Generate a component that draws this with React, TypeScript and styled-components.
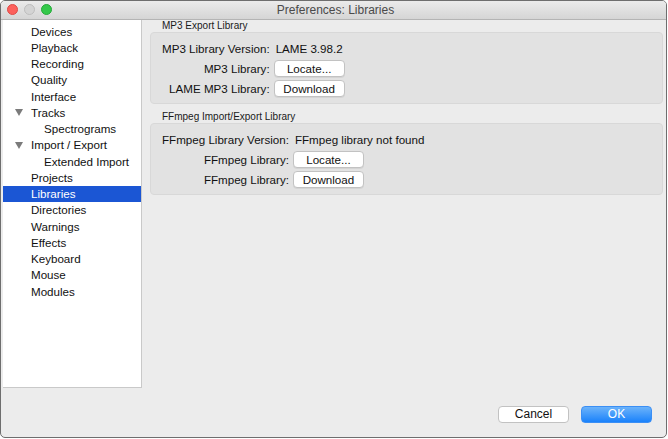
import * as React from 'react';
import styled, { createGlobalStyle } from 'styled-components';

interface NavItem {
  label: string;
  level: number;
  expandable?: boolean;
}

interface LibraryRow {
  label: string;
  value?: string;
  button?: string;
}

interface LibraryGroup {
  title: string;
  rows: LibraryRow[];
}

const navItems: NavItem[] = [
  { label: 'Devices', level: 0 },
  { label: 'Playback', level: 0 },
  { label: 'Recording', level: 0 },
  { label: 'Quality', level: 0 },
  { label: 'Interface', level: 0 },
  { label: 'Tracks', level: 0, expandable: true },
  { label: 'Spectrograms', level: 1 },
  { label: 'Import / Export', level: 0, expandable: true },
  { label: 'Extended Import', level: 1 },
  { label: 'Projects', level: 0 },
  { label: 'Libraries', level: 0 },
  { label: 'Directories', level: 0 },
  { label: 'Warnings', level: 0 },
  { label: 'Effects', level: 0 },
  { label: 'Keyboard', level: 0 },
  { label: 'Mouse', level: 0 },
  { label: 'Modules', level: 0 },
];

const groups: LibraryGroup[] = [
  {
    title: 'MP3 Export Library',
    rows: [
      { label: 'MP3 Library Version:', value: 'LAME 3.98.2' },
      { label: 'MP3 Library:', button: 'Locate...' },
      { label: 'LAME MP3 Library:', button: 'Download' },
    ],
  },
  {
    title: 'FFmpeg Import/Export Library',
    rows: [
      { label: 'FFmpeg Library Version:', value: 'FFmpeg library not found' },
      { label: 'FFmpeg Library:', button: 'Locate...' },
      { label: 'FFmpeg Library:', button: 'Download' },
    ],
  },
];

const App: React.FC = () => {
  const [selected, setSelected] = React.useState<string>('Libraries');

  return (
    <>
      <GlobalStyle />
      <Window>
        <TitleBar>
          <Lights>
            <Light color="#fc605c" edge="#de4a46" />
            <Light color="#d4d4d4" edge="#bdbdbd" />
            <Light color="#34c84a" edge="#24a938" />
          </Lights>
          <Title>Preferences: Libraries</Title>
        </TitleBar>

        <Body>
          <Sidebar>
            {navItems.map(item => (
              <NavRow
                key={item.label}
                level={item.level}
                active={item.label === selected}
                onClick={() => setSelected(item.label)}
              >
                {item.expandable && <Disclosure />}
                {item.label}
              </NavRow>
            ))}
          </Sidebar>

          <Panel>
            {groups.map(group => (
              <Section key={group.title}>
                <GroupTitle>{group.title}</GroupTitle>
                <GroupBox>
                  {group.rows.map((row, i) => (
                    <React.Fragment key={i}>
                      <Label>{row.label}</Label>
                      {row.button ? <Button>{row.button}</Button> : <Value>{row.value}</Value>}
                    </React.Fragment>
                  ))}
                </GroupBox>
              </Section>
            ))}
          </Panel>
        </Body>

        <Footer>
          <DialogButton primary={false}>Cancel</DialogButton>
          <DialogButton primary>OK</DialogButton>
        </Footer>
      </Window>
    </>
  );
};

export default App;

const GlobalStyle = createGlobalStyle`
  html, body {
    margin: 0;
    padding: 0;
    background: #ffffff;
  }

  body {
    font-family: "Liberation Sans", Arial, sans-serif;
    font-size: 11.6px;
    color: #111111;
  }
`;

const Window = styled.div`
  width: 667px;
  height: 438px;
  box-sizing: border-box;
  border: 1px solid #6e6e6e;
  border-radius: 5px;
  background: #ececec;
  display: flex;
  flex-direction: column;
  overflow: hidden;
`;

const TitleBar = styled.div`
  height: 18px;
  flex-shrink: 0;
  position: relative;
  display: flex;
  align-items: center;
  justify-content: center;
  background: linear-gradient(#ebebeb, #d5d5d5);
  border-bottom: 1px solid #b4b4b4;
`;

const Lights = styled.div`
  position: absolute;
  left: 6px;
  top: 3px;
  display: flex;
  gap: 6px;
`;

const Light = styled.span<{ color: string; edge: string }>`
  width: 11px;
  height: 11px;
  box-sizing: border-box;
  border-radius: 50%;
  background: ${props => props.color};
  border: 1px solid ${props => props.edge};
`;

const Title = styled.div`
  font-size: 12px;
  color: #4a4a4a;
  padding-left: 4px;
`;

const Body = styled.div`
  display: flex;
  height: 368px;
  flex-shrink: 0;
`;

const Sidebar = styled.div`
  width: 139px;
  margin-left: 2px;
  box-sizing: border-box;
  background: #ffffff;
  border-right: 1px solid #c9c9c9;
  border-bottom: 1px solid #c9c9c9;
  padding-top: 3px;
`;

const NavRow = styled.div<{ level: number; active: boolean }>`
  height: 16.25px;
  display: flex;
  align-items: center;
  position: relative;
  padding-left: ${props => (props.level === 0 ? 28 : 41)}px;
  background: ${props => (props.active ? '#1b56d4' : 'transparent')};
  color: ${props => (props.active ? '#ffffff' : '#111111')};
  cursor: default;
`;

const Disclosure = styled.span`
  position: absolute;
  left: 12px;
  top: 5px;
  width: 0;
  height: 0;
  border-left: 4px solid transparent;
  border-right: 4px solid transparent;
  border-top: 7px solid #7b7b7b;
`;

const Panel = styled.div`
  flex: 1;
  display: flex;
  flex-direction: column;
  padding: 0 3px 0 8px;
`;

const Section = styled.section`
  display: flex;
  flex-direction: column;

  & + & {
    margin-top: 7px;
  }
`;

const GroupTitle = styled.div`
  font-size: 10px;
  line-height: 12px;
  padding-left: 12px;
  color: #1a1a1a;
`;

const GroupBox = styled.div`
  display: grid;
  grid-template-columns: max-content 1fr;
  grid-auto-rows: 20px;
  column-gap: 4px;
  align-items: center;
  padding: 5px 12px 5px 11px;
  background: #e2e2e2;
  border: 1px solid #d8d8d8;
  border-radius: 4px;
`;

const Label = styled.div`
  text-align: right;
`;

const Value = styled.div`
  padding-left: 2px;
`;

const Button = styled.button`
  font: inherit;
  color: #111111;
  width: 71px;
  height: 17px;
  padding: 0;
  background: #ffffff;
  border: 1px solid #c2c2c2;
  border-radius: 4px;
  box-shadow: 0 1px 0 rgba(0, 0, 0, 0.06);
`;

const Footer = styled.div`
  flex: 1;
  display: flex;
  justify-content: flex-end;
  align-items: center;
  gap: 12px;
  padding: 3px 14px 0 0;
`;

const DialogButton = styled.button<{ primary: boolean }>`
  font: inherit;
  font-size: 12px;
  width: 71px;
  height: 17px;
  padding: 0;
  border-radius: 4px;
  color: ${props => (props.primary ? '#ffffff' : '#111111')};
  background: ${props => (props.primary ? 'linear-gradient(#6cb3fa, #1a82fb)' : '#ffffff')};
  border: 1px solid ${props => (props.primary ? '#3b8ff5' : '#c2c2c2')};
`;
